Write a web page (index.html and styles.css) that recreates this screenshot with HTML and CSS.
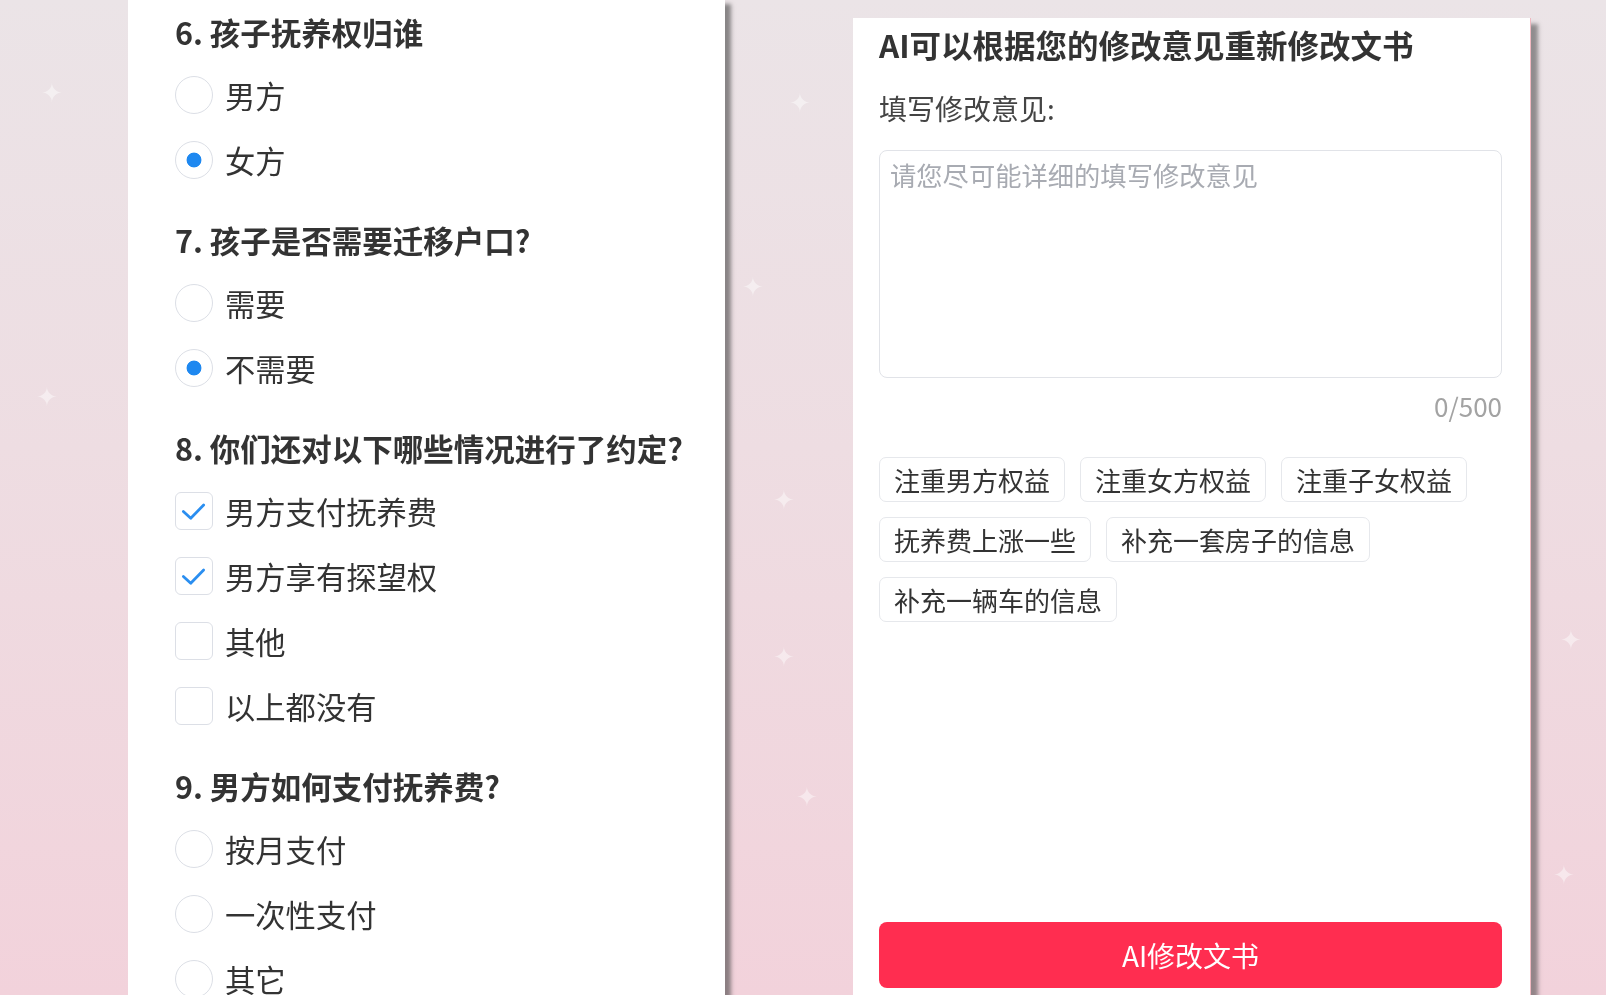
FILE: index.html
```html
<!DOCTYPE html>
<html lang="zh-CN">
<head>
    <meta charset="UTF-8">
    <meta name="viewport" content="width=device-width, initial-scale=1.0">
    <title>离婚协议书 - AI修改</title>
    <link rel="stylesheet" href="styles.css">
</head>
<body>
    <!-- background sparkles -->
    <div class="sparkles">
        <span class="star s1">✦</span>
        <span class="star s2">✦</span>
        <span class="star s3">✦</span>
        <span class="star s4">✦</span>
        <span class="star s5">✦</span>
        <span class="star s6">✦</span>
        <span class="star s7">✦</span>
        <span class="star s8">✦</span>
        <span class="star s9">✦</span>
    </div>

    <div class="page">
        <!-- Questionnaire -->
        <div class="panel questions">
            <div class="question">
                <h3>6. 孩子抚养权归谁</h3>
                <label class="option"><span class="radio"></span>男方</label>
                <label class="option"><span class="radio checked"></span>女方</label>
            </div>

            <div class="question">
                <h3>7. 孩子是否需要迁移户口?</h3>
                <label class="option"><span class="radio"></span>需要</label>
                <label class="option"><span class="radio checked"></span>不需要</label>
            </div>

            <div class="question">
                <h3>8. 你们还对以下哪些情况进行了约定?</h3>
                <label class="option">
                    <span class="checkbox">
                        <svg viewBox="0 0 38 38"><path d="M8 20 L16 27.5 L30 13"/></svg>
                    </span>男方支付抚养费
                </label>
                <label class="option">
                    <span class="checkbox">
                        <svg viewBox="0 0 38 38"><path d="M8 20 L16 27.5 L30 13"/></svg>
                    </span>男方享有探望权
                </label>
                <label class="option"><span class="checkbox"></span>其他</label>
                <label class="option"><span class="checkbox"></span>以上都没有</label>
            </div>

            <div class="question">
                <h3>9. 男方如何支付抚养费?</h3>
                <label class="option"><span class="radio"></span>按月支付</label>
                <label class="option"><span class="radio"></span>一次性支付</label>
                <label class="option"><span class="radio"></span>其它</label>
            </div>
        </div>

        <!-- AI revise -->
        <div class="panel revise">
            <h2>AI可以根据您的修改意见重新修改文书</h2>
            <div class="field-label">填写修改意见:</div>
            <textarea class="opinion" maxlength="500" placeholder="请您尽可能详细的填写修改意见"></textarea>
            <div class="counter">0/500</div>

            <div class="tags">
                <span class="tag">注重男方权益</span>
                <span class="tag">注重女方权益</span>
                <span class="tag">注重子女权益</span>
                <span class="tag">抚养费上涨一些</span>
                <span class="tag">补充一套房子的信息</span>
                <span class="tag">补充一辆车的信息</span>
            </div>

            <button class="submit">AI修改文书</button>
        </div>
    </div>
</body>
</html>
```

FILE: styles.css
```css
html, body {
    height: 100%;
}

body {
    margin: 0;
    overflow: hidden;
    font-family: "Noto Sans CJK SC", "Noto Sans", sans-serif;
    color: #333;
    background: linear-gradient(to bottom, #ebe4e7 0%, #eedde2 45%, #f2d2db 100%);
}

.sparkles {
    position: fixed;
    inset: 0;
    pointer-events: none;
}

.star {
    position: absolute;
    color: #fff;
    opacity: 0.45;
    font-size: 26px;
    line-height: 1;
}

.s1 { left: 41px; top: 78px; }
.s2 { left: 789px; top: 88px; }
.s3 { left: 742px; top: 272px; }
.s4 { left: 36px; top: 382px; }
.s5 { left: 773px; top: 485px; }
.s6 { left: 773px; top: 642px; }
.s7 { left: 796px; top: 782px; }
.s8 { left: 1553px; top: 860px; }
.s9 { left: 1560px; top: 625px; }

.page {
    position: relative;
    display: flex;
    align-items: flex-start;
    height: 100%;
}

.panel {
    background: #fff;
    flex-shrink: 0;
    box-sizing: border-box;
}

.questions {
    width: 597px;
    height: 100%;
    margin-left: 128px;
    padding: 10px 0 0 47px;
    box-shadow: 6px 4px 4px rgba(70, 70, 70, 0.6);
}

.question {
    margin-bottom: 26px;
}

.question h3 {
    margin: 0 0 8px;
    font-size: 30.5px;
    line-height: 44px;
    font-weight: bold;
    color: #333;
}

.option {
    display: flex;
    align-items: center;
    gap: 12px;
    height: 65px;
    font-size: 30.3px;
    color: #333;
}

.radio {
    width: 38px;
    height: 38px;
    box-sizing: border-box;
    border: 1.5px solid #dcdfe6;
    border-radius: 50%;
    background: #fff;
}

.radio.checked {
    background: radial-gradient(circle, #1e88f0 0 7px, #fff 7.8px);
}

.checkbox {
    width: 38px;
    height: 38px;
    box-sizing: border-box;
    border: 1.5px solid #dcdfe6;
    border-radius: 6px;
    background: #fff;
}

.checkbox svg {
    display: block;
    width: 35px;
    height: 35px;
}

.checkbox path {
    fill: none;
    stroke: #2a8ef0;
    stroke-width: 3;
    stroke-linecap: round;
    stroke-linejoin: round;
}

.revise {
    width: 678px;
    height: calc(100% + 20px);
    margin: 18px 0 0 128px;
    padding: 5px 28px 0 26px;
    border-right: 1px solid #f0b8c0;
    box-shadow: 7px 6px 4px rgba(70, 70, 70, 0.55);
}

.revise h2 {
    margin: 0;
    font-size: 31.5px;
    line-height: 43px;
    font-weight: bold;
    color: #333;
}

.field-label {
    margin-top: 22px;
    font-size: 28px;
    line-height: 40px;
    color: #444;
}

.opinion {
    display: block;
    width: 100%;
    height: 228px;
    margin-top: 22px;
    box-sizing: border-box;
    padding: 7px 10px;
    border: 1px solid #e1e3e8;
    border-radius: 8px;
    font-family: inherit;
    font-size: 26.3px;
    line-height: 34px;
    color: #333;
    resize: none;
    outline: none;
}

.opinion::placeholder {
    color: #a8abb2;
}

.counter {
    margin-top: 11px;
    text-align: right;
    font-size: 26px;
    line-height: 34px;
    color: #a3a3a3;
}

.tags {
    display: flex;
    flex-wrap: wrap;
    gap: 15px;
    margin-top: 34px;
}

.tag {
    height: 45px;
    box-sizing: border-box;
    padding: 0 14px;
    border: 1px solid #e6e8ec;
    border-radius: 7px;
    font-size: 26px;
    line-height: 43px;
    color: #333;
}

.submit {
    display: block;
    width: 100%;
    height: 66px;
    margin-top: 300px;
    border: none;
    border-radius: 8px;
    background: #ff2d50;
    color: #fff;
    font-family: inherit;
    font-size: 28px;
    cursor: pointer;
}
```
